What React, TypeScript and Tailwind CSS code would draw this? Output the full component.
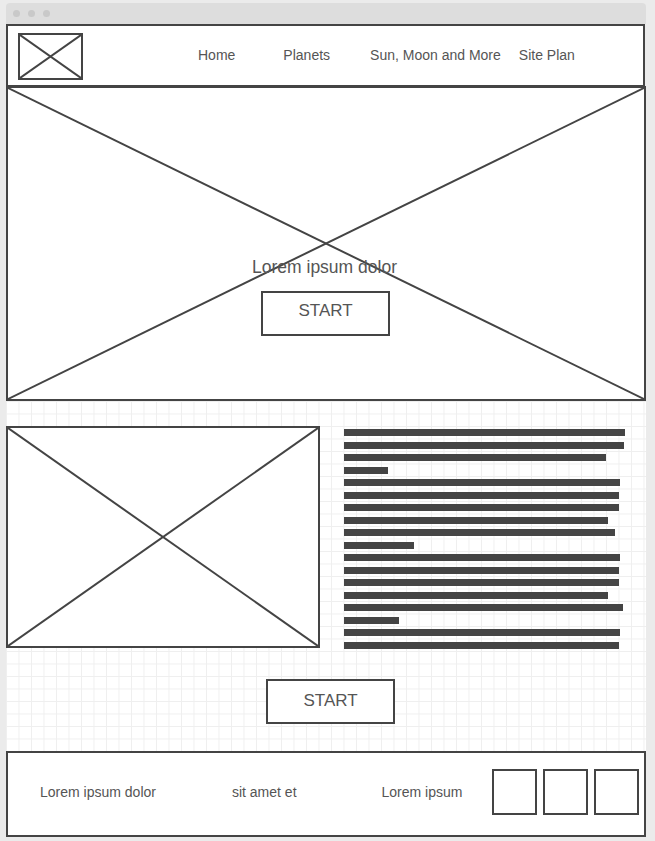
import React from "react";

const Cross = () => (
  <svg
    className="absolute inset-0 h-full w-full"
    viewBox="0 0 100 100"
    preserveAspectRatio="none"
  >
    <line x1="0" y1="0" x2="100" y2="100" stroke="#444" strokeWidth="2" vectorEffect="non-scaling-stroke" />
    <line x1="100" y1="0" x2="0" y2="100" stroke="#444" strokeWidth="2" vectorEffect="non-scaling-stroke" />
  </svg>
);

const lines = [281, 280, 262, 44, 276, 275, 275, 264, 271, 70, 276, 275, 275, 264, 279, 55, 276, 275];

const App = () => {
  return (
    <div
      className="w-[655px] h-[841px] bg-[#ebebeb] pt-[3px] pl-[6px] overflow-hidden text-[#555]"
      style={{ fontFamily: '"Liberation Sans", Arial, sans-serif' }}
    >
      <div className="w-[640px]">
        {/* window chrome */}
        <div className="h-[21px] bg-[#dddddd] rounded-t-[4px] flex items-center gap-[8px] pl-[7px]">
          <span className="w-[7px] h-[7px] rounded-full bg-[#c9c9c9]" />
          <span className="w-[7px] h-[7px] rounded-full bg-[#c9c9c9]" />
          <span className="w-[7px] h-[7px] rounded-full bg-[#c9c9c9]" />
        </div>

        {/* header */}
        <div className="h-[63px] w-[639px] border-2 border-[#444] bg-white flex items-center pl-[10px]">
          <div className="relative w-[65px] h-[47px] border-2 border-[#444] mt-[2px]">
            <Cross />
          </div>
          <nav className="flex items-center text-[14px]">
            <a className="ml-[115px]">Home</a>
            <a className="ml-[48px]">Planets</a>
            <a className="ml-[40px]">Sun, Moon and More</a>
            <a className="ml-[18px]">Site Plan</a>
          </nav>
        </div>

        {/* hero */}
        <div className="relative -mt-px h-[315px] border-2 border-[#444] bg-white flex flex-col items-center">
          <Cross />
          <p className="relative mt-[169px] -ml-[3px] text-[17.5px] leading-[20px]">Lorem ipsum dolor</p>
          <button className="relative mt-[14px] w-[129px] h-[45px] border-2 border-[#444] text-[17px] -ml-px pb-[6px]">
            START
          </button>
        </div>

        {/* content */}
        <div className="h-[350px] bg-white bg-[linear-gradient(to_right,#efefef_1px,transparent_1px),linear-gradient(to_bottom,#efefef_1px,transparent_1px)] bg-[size:12.5px_12.5px] pt-[25px] flex flex-col">
          <div className="flex">
            <div className="relative w-[314px] h-[222px] border-2 border-[#444] bg-white">
              <Cross />
            </div>
            <div className="ml-[24px] pt-[3px] flex flex-col gap-[5.5px]">
              {lines.map((w, i) => (
                <div key={i} className="h-[7px] bg-[#444]" style={{ width: w }} />
              ))}
            </div>
          </div>
          <button className="mt-[30px] ml-[260px] w-[129px] h-[45px] border-2 border-[#444] bg-white text-[17px]">
            START
          </button>
        </div>

        {/* footer */}
        <div className="h-[86px] border-2 border-[#444] bg-white flex items-center text-[14px]">
          <span className="ml-[32px] -mt-[3px]">Lorem ipsum dolor</span>
          <span className="ml-[76px] -mt-[3px]">sit amet et</span>
          <span className="ml-[85px] -mt-[3px]">Lorem ipsum</span>
          <div className="ml-[30px] flex gap-[6px] -mt-[4px]">
            <div className="w-[45px] h-[46px] border-2 border-[#444]" />
            <div className="w-[45px] h-[46px] border-2 border-[#444]" />
            <div className="w-[45px] h-[46px] border-2 border-[#444]" />
          </div>
        </div>
      </div>
    </div>
  );
};

export default App;
